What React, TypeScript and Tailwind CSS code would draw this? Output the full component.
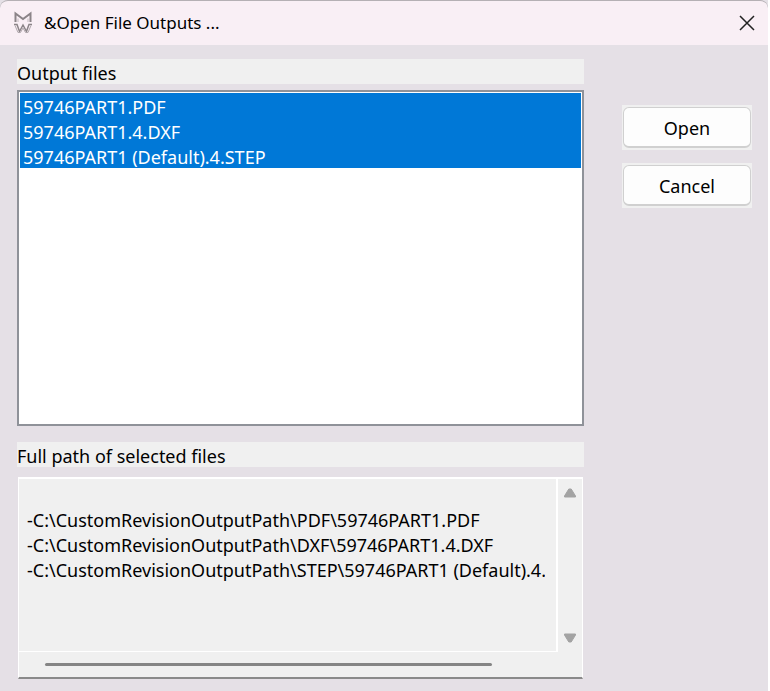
import React, { useState } from 'react';

const files = [
  { name: '59746PART1.PDF', folder: 'PDF' },
  { name: '59746PART1.4.DXF', folder: 'DXF' },
  { name: '59746PART1 (Default).4.STEP', folder: 'STEP' },
];

const root = 'C:\\CustomRevisionOutputPath';

function Logo() {
  return (
    <svg className="h-6 w-5" viewBox="0 0 20 24" fill="none" stroke="#8b8488">
      <path d="M3.5 11V2.5L11 8L18.5 2.5V11" strokeWidth="2" />
      <path d="M6 11V7.5M16 11V7.5" stroke="#c3babf" />
      <path d="M2 13.5H5L7.5 20.5L11 14L14.5 20.5L17 13.5H20" strokeWidth="1.5" />
      <path d="M3 14.5L6 21.5H8.5L11 17L13.5 21.5H16L19 14.5" stroke="#b0a7ac" />
    </svg>
  );
}

function TitleBar() {
  return (
    <header className="flex h-[45px] items-center justify-between rounded-t-lg border-t border-[#b5b0b4] bg-[#f9eff5] pr-3 pl-3">
      <div className="flex items-center gap-3">
        <Logo />
        <h1 className="text-[17px] leading-6">&amp;Open File Outputs ...</h1>
      </div>
      <button type="button" aria-label="Close" className="flex size-[18px] items-center justify-center">
        <svg className="size-4" viewBox="0 0 16 16" stroke="#222" strokeWidth="1.5">
          <path d="M1 1L15 15M15 1L1 15" />
        </svg>
      </button>
    </header>
  );
}

function DialogButton({ children }: { children: React.ReactNode }) {
  return (
    <div className="bg-[#f0f0f0] px-px py-[2px]">
      <button
        type="button"
        className="block h-[41px] w-full rounded-[6px] border border-b-2 border-[#d0d0d0] bg-[#fdfdfd] pt-[2px] text-[18px] leading-6"
      >
        {children}
      </button>
    </div>
  );
}

function Arrow({ className }: { className?: string }) {
  return (
    <svg className={className} width="14" height="10" viewBox="0 0 14 10" fill="#a3a3a3" stroke="#a3a3a3" strokeLinejoin="round">
      <path d="M5.8 1H8.2L12.5 8V9H1.5V8Z" />
    </svg>
  );
}

export default function App() {
  const [selected, setSelected] = useState(files.map((f) => f.name));

  const paths = files
    .filter((f) => selected.includes(f.name))
    .map((f) => `\n-${root}\\${f.folder}\\${f.name}`)
    .join('');

  return (
    <div className="min-h-screen bg-white pr-[2px] font-['Noto_Sans',sans-serif] text-black">
      <div className="min-h-screen bg-[#e5e0e6]">
        <TitleBar />
        <main className="flex gap-[38px] pt-[14px] pr-4 pb-3 pl-[17px]">
          <div className="flex min-w-0 flex-1 flex-col">
            <label htmlFor="outputs" className="bg-[#f0f0f0] pt-[3px] text-[18px] leading-[22px]">
              Output files
            </label>
            <select
              id="outputs"
              multiple
              value={selected}
              onChange={(e) => setSelected(Array.from(e.target.selectedOptions, (o) => o.value))}
              className="mt-[6px] h-[336px] w-full overflow-hidden border-2 border-[#8f9299] bg-white p-px text-[18px] outline-none"
            >
              {files.map((f) => (
                <option
                  key={f.name}
                  value={f.name}
                  className="h-[25px] px-[3px] pt-[2px] pb-0 checked:bg-[#0078d7] checked:bg-linear-to-r checked:from-[#0078d7] checked:to-[#0078d7] checked:text-white"
                >
                  {f.name}
                </option>
              ))}
            </select>

            <label htmlFor="paths" className="mt-4 bg-[#f0f0f0] pt-[3px] text-[18px] leading-[22px]">
              Full path of selected files
            </label>
            <div className="mt-[10px] mr-px ml-px border border-t-2 border-b-2 border-white border-b-[#8a8a8a] bg-[#f0f0f0]">
              <div className="flex">
                <div className="min-w-0 flex-1 border-r-2 border-b border-white pt-1 pr-[11px] pl-2">
                  <textarea
                    id="paths"
                    readOnly
                    wrap="off"
                    value={paths}
                    className="block h-[168px] w-full resize-none overflow-hidden bg-transparent text-[18px] leading-[25px] outline-none"
                  />
                </div>
                <div className="flex w-6 flex-col items-center justify-between py-[9px]">
                  <Arrow />
                  <Arrow className="rotate-180" />
                </div>
              </div>
              <div className="flex h-[25px] items-center pr-[90px] pl-[26px]">
                <div className="h-[3px] w-full rounded-full bg-[#858585]" />
              </div>
            </div>
          </div>

          <div className="flex w-[130px] flex-col gap-[13px] pt-[46px]">
            <DialogButton>Open</DialogButton>
            <DialogButton>Cancel</DialogButton>
          </div>
        </main>
      </div>
    </div>
  );
}
